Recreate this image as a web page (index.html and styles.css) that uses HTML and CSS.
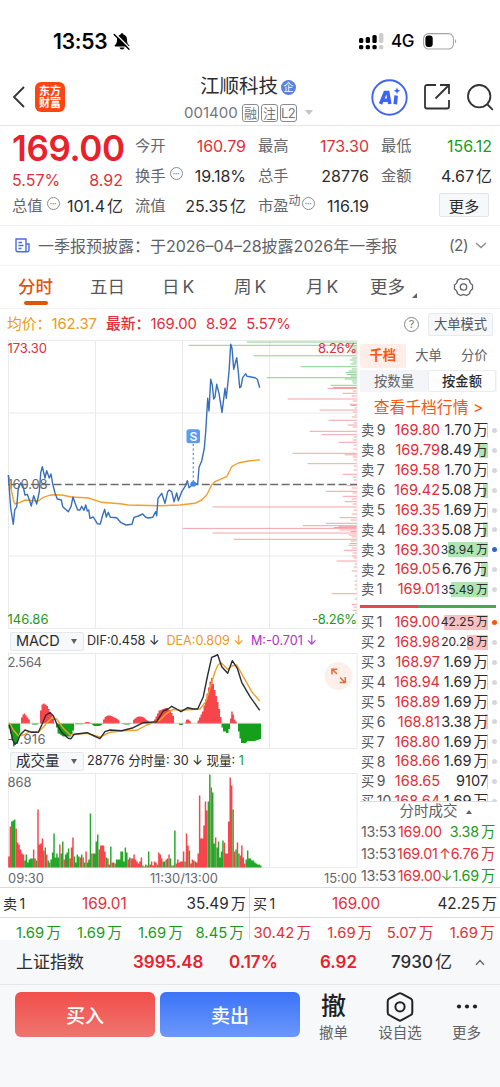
FILE: index.html
```html
<!DOCTYPE html>
<html lang="zh-CN">
<head>
    <meta charset="UTF-8">
    <meta name="viewport" content="width=device-width, initial-scale=1.0">
    <title>江顺科技 001400</title>
    <link rel="stylesheet" href="styles.css">
</head>
<body>

<div class="status">
    <span class="clock">13:53</span>
    <svg class="bell" width="18" height="19" viewBox="0 0 18 19">
        <path d="M9 1.2c.9 0 1.4.6 1.4 1.3 2.300.7 3.600 2.500 3.600 4.900 0 3.400.8 4.500 2 5.600.7.700.4 1.500-.5 1.500H2.500c-.9 0-1.200-.8-.5-1.500 1.200-1.100 2-2.200 2-5.600C4 5 5.300 3.200 7.600 2.500 7.600 1.800 8.100 1.200 9 1.200zM6.500 15.600h5c-.3 1.200-1.300 1.900-2.500 1.900s-2.200-.7-2.500-1.900z"/>
        <path d="M2.200 1.500L17 16.300" stroke="#fff" stroke-width="1.5"/>
        <path d="M1.200 2.400L16 17.200" stroke="#000" stroke-width="1.400" stroke-linecap="round"/>
    </svg>
    <svg class="signal" width="25" height="17" viewBox="0 0 25 17">
        <rect x="0" y="5" width="4.300" height="5" rx="1.500"/><rect x="6.700" y="4" width="4.300" height="6" rx="1.500"/><rect x="13.400" y="2" width="4.300" height="8" rx="1.500"/>
        <rect class="dim" x="20.100" y="0" width="4.300" height="10" rx="1.500"/>
        <rect x="0" y="12" width="4.300" height="4.300" rx="1.500"/><rect x="6.700" y="12" width="4.300" height="4.300" rx="1.500"/><rect x="13.400" y="12" width="4.300" height="4.300" rx="1.500"/>
        <rect class="dim" x="20.100" y="12" width="4.300" height="4.300" rx="1.500"/>
    </svg>
    <span class="net">4G</span>
    <svg class="battery" width="34" height="17" viewBox="0 0 34 17">
        <rect x=".6" y=".6" width="29.800" height="15.400" rx="5" fill="none" stroke="#a3a3a3" stroke-width="1.100"/>
        <rect x="2.400" y="2.500" width="7.300" height="11.600" rx="3"/>
        <path d="M32 6v4.500c1.600-.7 1.600-3.800 0-4.500z" fill="#a3a3a3"/>
    </svg>
</div>

<div class="header">
    <svg class="back" width="14" height="24" viewBox="0 0 14 24"><path d="M12 2L2 12l10 10"/></svg>
    <div class="logo"><span>东方</span><span>财富</span></div>
    <div class="title">
        <div class="name">江顺科技<span class="ent">企</span></div>
        <div class="code">001400<b>融</b><b>注</b><b>L2</b><i></i></div>
    </div>
    <svg class="ai" width="37" height="37" viewBox="0 0 37 37">
        <circle cx="18.500" cy="18.500" r="17.200" fill="none" stroke="#3f64f3" stroke-width="1.900"/>
        <path d="M9.500 25l4.700-11.500h2.600l2 11.500M11.800 21.300h6" fill="none" stroke="#3f64f3" stroke-width="3.600"/>
        <path d="M25.200 16.500l-1 8.700" stroke="#3f64f3" stroke-width="3.600"/>
        <path d="M26 8.500l1 2.300 2.300 1-2.300 1-1 2.300-1-2.300-2.300-1 2.300-1z" fill="#3f64f3"/>
    </svg>
    <svg class="share" width="26" height="26" viewBox="0 0 26 26"><path d="M12 1H3a2 2 0 0 0-2 2v19.500a2 2 0 0 0 2 2h20a2 2 0 0 0 2-2V16M16 1h9v9M25 1L11.500 14.500"/></svg>
    <svg class="search" width="27" height="27" viewBox="0 0 27 27"><circle cx="12.200" cy="12.200" r="11.200"/><path d="M20 20l5.800 5.800"/></svg>
</div>

<div class="quote">
    <div class="col first">
        <div class="price">169.00</div>
        <div class="chg"><span>5.57%</span><span>8.92</span></div>
        <div class="item"><label>总值<em>•••</em></label><span>101.4<u>亿</u></span></div>
    </div>
    <div class="col">
        <div class="item"><label>今开</label><span class="red">160.79</span></div>
        <div class="item"><label>换手<em>•••</em></label><span>19.18%</span></div>
        <div class="item"><label>流值</label><span>25.35<u>亿</u></span></div>
    </div>
    <div class="col">
        <div class="item"><label>最高</label><span class="red">173.30</span></div>
        <div class="item"><label>总手</label><span>28776</span></div>
        <div class="item"><label>市盈<sup>动</sup><em>•••</em></label><span>116.19</span></div>
    </div>
    <div class="col">
        <div class="item"><label>最低</label><span class="green">156.12</span></div>
        <div class="item"><label>金额</label><span>4.67<u>亿</u></span></div>
        <div class="item end"><button class="more">更多</button></div>
    </div>
</div>

<div class="notice">
    <svg width="15" height="15" viewBox="0 0 15 15"><path d="M11 13.800V1H1v10.800a2 2 0 0 0 2 2h9.500a1.500 1.500 0 0 0 1.500-1.500V6h-3M3.500 4.500H7M3.500 7.500h5M3.500 10.500h3"/></svg>
    <span class="text">一季报预披露：于2026–04–28披露2026年一季报</span>
    <span class="count">(2)</span>
    <svg class="arrow" width="12" height="7" viewBox="0 0 12 7"><path d="M1 1l5 4.500L11 1"/></svg>
</div>

<div class="tabs">
    <span class="on">分时</span>
    <span>五日</span>
    <span>日<s>K</s></span>
    <span>周<s>K</s></span>
    <span>月<s>K</s></span>
    <span>更多<i></i></span>
    <svg width="21" height="20" viewBox="0 0 21 20"><path d="M7.500 1.500q3 1.600 6 0l3 1.800q.2 3.200 3 4.700v4q-2.800 1.500-3 4.700l-3 1.800q-3-1.600-6 0l-3-1.800q-.2-3.200-3-4.700V8q2.800-1.500 3-4.700z"/><circle cx="10.500" cy="10" r="3.200"/></svg>
</div>

<div class="summary">
    <span class="orange">均价：162.37</span>
    <span class="red"><span class="latest">最新：</span>169.00</span>
    <span class="red">8.92</span>
    <span class="red">5.57%</span>
    <span class="help">?</span>
    <span class="mode">大单模式</span>
</div>

<div class="main">
    <div class="charts">
        <svg class="price-chart" width="358" height="289" viewBox="0 340 358 289">
            <path class="grid" d="M8.500 340V629M95.500 340V629M182.500 340V629M269.500 340V629M357 340V629M8 340.500H357M8 413H357M8 556H357M8 628.500H357"/>
            <path class="base" d="M8 484.500H357"/>
            <path class="depth-g" id="asks"/>
            <path class="depth-r" id="bids"/>
            <text class="t-gray" x="7.500" y="488.500" textLength="40">160.08</text>
            <polyline class="avg" points="8.500,475 11.700,491.700 13.300,500 15,504 20,502.300 25,500 38.300,501 43.300,497.300 50,495.200 55,494.700 62,495 71.700,497 88.300,498 101.700,502.300 120,503.700 128.300,505 160,505.700 180,505 195,503.300 201.700,500 206.700,495 211.700,485 215,481.700 226.700,476.700 231.700,466.700 238.300,463 248.300,461 259.700,459.700"/>
            <polyline class="line" points="8.300,475 10.700,508 13.300,524.300 14.700,510 16.700,506.700 18.300,488 20.700,483 23.300,487 25,495 27.300,494.300 30,501.700 31.300,506 33.700,495.700 36.700,504 39.300,491.700 40.700,473 42.300,466.700 45,478 46.700,470.700 49.300,478 51,474 52.700,484 55,493 57.300,499 61.300,500 62.700,506.700 68.300,511.700 71,506.700 73,497 75,503 77.700,510 80,510 81.700,506.300 84,510.300 85.700,505 87.300,511 88.700,510 90,518.300 93.300,517 97.300,523.700 100.300,524 102.700,515 104.700,509.300 106.300,517 108.300,512.300 110.300,517.300 116.700,517.700 121,522.700 126,525 132,524.300 134,517.300 138.300,516 142.700,514 145.700,517.300 148.300,518 152.700,517.300 155.700,511.700 156.700,515.700 158,498.300 161.700,493.300 165,503.300 167.700,491.700 169.300,490 171.700,491.700 174,501.700 176.700,493 178.300,500.700 181.700,491.700 185,486.700 187.300,480.700 189,487.700 193.300,484 197.700,484 199,467.300 201.700,461 204.300,448.300 205.700,431.700 207.700,398.300 209,411 210.700,379.300 212.300,385 213.700,399 215,397 216.700,384.300 219,393.300 222,412.300 225,388.300 226.300,398.300 229,371.700 230.700,344.300 232,348.300 233.700,369.300 236.700,357.700 238.300,371.700 239.700,387.700 241,386.700 242.700,377.700 245.700,373.700 247,376.300 255,377.700 257.300,379.300 259.700,387.700"/>
            <path class="s-line" d="M193.300 444V482"/>
            <circle cx="193.300" cy="484" r="2.800" fill="#3f86ee"/>
            <rect x="186.500" y="429.300" width="13.500" height="14" rx="2.500" fill="#5b9cf2"/>
            <text class="s-mark" x="193.300" y="440.500">S</text>
            <text class="t-red" x="7.500" y="352.500" textLength="39.500">173.30</text>
            <text class="t-red" x="318" y="352.500" textLength="39">8.26%</text>
            <text class="t-green" x="7.500" y="624" textLength="41">146.86</text>
            <text class="t-green" x="312" y="624" textLength="45">-8.26%</text>
        </svg>

        <div class="ind">
            <span class="pick">MACD<i></i></span>
            <span class="v dif">DIF:0.458 ↓</span>
            <span class="v dea">DEA:0.809 ↓</span>
            <span class="v m">M:-0.701 ↓</span>
        </div>
        <svg class="macd-chart" width="358" height="96" viewBox="0 653 358 96">
            <path class="grid" d="M8.500 653V749M95.500 653V749M182.500 653V749M269.500 653V749M357 653V749M8 653.500H357M8 748.500H357"/>
            <text class="t-gray" x="7.500" y="666.500" textLength="34.500">2.564</text>
            <text class="t-gray" x="7.500" y="744" textLength="38">-1.916</text>
            <path class="up" d="M21 723.500v-6h1.500v-3h1.300v-1h1.500v2h1.500v2h1.500v2h1.500v4zM40 723.500v-13h1.500v-6h1.500v-1h1.500v1h2v1.500h1.500v3h1.500v3h1.500v3h1.500v4h1.500v4.500zM83 723.500l3-1.500h3l2 1.500zM103 723.500v-4h1.500v-2l3-2h3l4 2 3 1.500 2 2v2.500zM133 723.500v-3l2-2 3-2h3l3 1 2 2 3 2v2zM154 723.500v-4h1.500v-3h1.500v-3h1.500v-3h1.500l3-1.500 3-1h2v2h3v3h1.500v3h1.500v7.500zM185 723.500l1.500-4h2l2 2 1 2zM197.500 723.500v-3h1.500v-3h1.500v-3h1.500v-3h1.500v-6h1.500v-6h1.500v-6h1.500v-6h1.500v-6h1.500v-3.500h1.500v6h1.500v6h1.500v6h1.500v6h1.500v7h1.500v8h1.500v6.500zM230 723.500v-5h1.200v-7h1.500v3h1.200v5h1.500v2h1.300v2z"/>
            <path class="down" d="M8.500 723.500v5h1.500v5h1.500v7h1.500v6h1.500v-2h1.500v-2h1.500v-5h1.500v-4h1.200v-10zM32 723.500v1h6v-1zM56 723.500v4h1.500v6h1.500l4 3h8v-2h1.500v-4h1.500v-7zM75 723.500v.8h8v-.8zM91 723.500l3 2.500h5l2-.5 2-2zM121 723.500l4 1h4l3-1zM178.500 723.500l1 1.500h3l1-1.500zM221.500 723.500v4h1.500v4h3v1.500h2.500v-4h1.500v-5.500zM238 723.500v8h1.500v7h1.500v4.500h5l1.500-2h7l3-1 3.500-1v-15.500z"/>
            <path class="zero" d="M8.500 723.300H261"/>
            <polyline class="avg" points="9.300,722.700 13.300,730 18.300,736 23.300,735 30,731.500 38.300,732.300 45,725 51.700,717.700 56.700,719 63.300,728.300 70,735 86.700,733.300 100,737 110,732.300 123.300,730.700 136.700,730.300 146.700,725 160,720 166.700,713.300 173.300,709.300 180,710.300 188.300,709.700 200,709 205.700,701.700 210,688.300 215,671.700 218,665 221,662.700 227.700,669.300 232,666 236.700,665 243.300,676.700 251.700,691.700 259.700,701"/>
            <polyline class="dif-line" points="9.300,725 12.700,740 15,744.300 17.300,742.300 20,735 25,730 31.700,732.300 38.300,732.300 41.700,725 46,715 50,712.700 53.300,715.700 57.300,725 61.700,732.300 68.300,738.300 71,738.700 74,734.300 87.300,732.700 94.300,736 100,738.700 105,731.700 110,730 121.700,730.700 133.300,727.700 143.300,722.700 156.700,721.700 163.300,711 168.300,709 171.700,706.300 176.700,709 181,711.700 187.700,707.700 193.300,709 197.700,709 203.300,696.700 207.700,675 211.700,657.300 215,656 217.700,654.700 221.700,666.700 227.700,673.300 232.300,660.700 237.300,668.300 241.700,682.300 250,696.700 259.700,710.300"/>
            <circle cx="338.500" cy="676" r="14" fill="#fdf0ea"/>
            <path class="expand" d="M337 674l-4.500-4.500M332 674.500v-5.300h5.300M340 677.500l5 5M345.300 677v5.600h-5.600"/>
        </svg>

        <div class="ind">
            <span class="pick">成交量<i></i></span>
            <span class="v vol">28776 分时量: 30 ↓ 现量: <span class="green">1</span></span>
        </div>
        <svg class="vol-chart" width="358" height="95" viewBox="0 773 358 95">
            <path class="grid" d="M8.500 773V868M95.500 773V868M182.500 773V868M269.500 773V868M357 773V868M8 773.500H357M8 867.500H357"/>
            <path class="vol-r" id="vol-up"/>
            <path class="vol-g" id="vol-down"/>
            <text class="t-gray" x="7.500" y="786.500" textLength="24">868</text>
        </svg>
        <div class="times"><span>09:30</span><span>11:30/13:00</span><span>15:00</span></div>
    </div>

    <div class="book">
        <div class="book-tabs"><span class="on">千档</span><span>大单</span><span>分价</span></div>
        <div class="switch"><span>按数量</span><span class="on">按金额</span></div>
        <div class="link">查看千档行情 &gt;</div>
        <div class="rows sell">
            <div class="row"><label>卖<s>9</s></label><b>169.80</b><span>1.70<u>万</u><i style="width:1px"></i></span></div>
            <div class="row"><label>卖<s>8</s></label><b>169.79</b><span>8.49<u>万</u><i style="width:9px"></i></span></div>
            <div class="row"><label>卖<s>7</s></label><b>169.58</b><span>1.70<u>万</u><i style="width:1px"></i></span></div>
            <div class="row"><label>卖<s>6</s></label><b>169.42</b><span>5.08<u>万</u><i style="width:5px"></i></span></div>
            <div class="row"><label>卖<s>5</s></label><b>169.35</b><span>1.69<u>万</u><i style="width:1px"></i></span></div>
            <div class="row"><label>卖<s>4</s></label><b>169.33</b><span>5.08<u>万</u><i style="width:5px"></i></span></div>
            <div class="row long blue"><label>卖<s>3</s></label><b>169.30</b><span>38.94<u>万</u><i style="width:40px"></i></span></div>
            <div class="row"><label>卖<s>2</s></label><b>169.05</b><span>6.76<u>万</u><i style="width:7px"></i></span></div>
            <div class="row long"><label>卖<s>1</s></label><b>169.01</b><span>35.49<u>万</u><i style="width:37px"></i></span></div>
        </div>
        <div class="ratio"><i></i></div>
        <div class="rows buy">
            <div class="row long hot"><label>买<s>1</s></label><b>169.00</b><span>42.25<u>万</u><i style="width:44px"></i></span></div>
            <div class="row long"><label>买<s>2</s></label><b>168.98</b><span>20.28<u>万</u><i style="width:21px"></i></span></div>
            <div class="row"><label>买<s>3</s></label><b>168.97</b><span>1.69<u>万</u><i style="width:1px"></i></span></div>
            <div class="row"><label>买<s>4</s></label><b>168.94</b><span>1.69<u>万</u><i style="width:1px"></i></span></div>
            <div class="row"><label>买<s>5</s></label><b>168.89</b><span>1.69<u>万</u><i style="width:1px"></i></span></div>
            <div class="row"><label>买<s>6</s></label><b>168.81</b><span>3.38<u>万</u><i style="width:3px"></i></span></div>
            <div class="row"><label>买<s>7</s></label><b>168.80</b><span>1.69<u>万</u><i style="width:1px"></i></span></div>
            <div class="row"><label>买<s>8</s></label><b>168.66</b><span>1.69<u>万</u><i style="width:1px"></i></span></div>
            <div class="row"><label>买<s>9</s></label><b>168.65</b><span>9107<i style="width:1px"></i></span></div>
            <div class="row"><label>买<s>10</s></label><b>168.64</b><span>1.69<u>万</u><i style="width:1px"></i></span></div>
        </div>
        <div class="deals-title">分时成交<i></i></div>
        <div class="deals">
            <div class="deal"><span>13:53</span><b>169.00</b><em class="green">3.38<u>万</u></em></div>
            <div class="deal"><span>13:53</span><b>169.01</b><em class="red">↑6.76<u>万</u></em></div>
            <div class="deal"><span>13:53</span><b>169.00</b><em class="green">↓1.69<u>万</u></em></div>
        </div>
    </div>
</div>

<div class="level">
    <div class="side"><label>卖<s>1</s></label><b>169.01</b><span>35.49<u>万</u></span></div>
    <div class="side"><label>买<s>1</s></label><b>169.00</b><span>42.25<u>万</u></span></div>
</div>
<div class="queue">
    <div class="half green"><span>1.69<u>万</u></span><span>1.69<u>万</u></span><span>1.69<u>万</u></span><span>8.45<u>万</u></span></div>
    <div class="half red"><span>30.42<u>万</u></span><span>1.69<u>万</u></span><span>5.07<u>万</u></span><span>1.69<u>万</u></span></div>
</div>

<div class="index">
    <span class="idx-name">上证指数</span>
    <b class="idx-val">3995.48</b>
    <b class="idx-pct">0.17%</b>
    <b class="idx-chg">6.92</b>
    <span class="idx-amt">7930<u>亿</u></span>
    <svg width="10" height="7" viewBox="0 0 10 7"><path d="M1 5.800L5 1.500l4 4.300"/></svg>
</div>

<div class="actions">
    <button class="btn buy-btn">买入</button>
    <button class="btn sell-btn">卖出</button>
    <div class="act"><span class="glyph">撤</span><span>撤单</span></div>
    <div class="act wide">
        <svg width="28" height="30" viewBox="0 0 28 30"><path d="M12.500 1.600a3 3 0 0 1 3 0l9.300 5a3 3 0 0 1 1.500 2.600v11.200a3 3 0 0 1-1.500 2.600l-9.300 5.200a3 3 0 0 1-3 0L3.200 23a3 3 0 0 1-1.500-2.600V9.200a3 3 0 0 1 1.500-2.600z"/><circle cx="14" cy="14.800" r="4.600"/></svg>
        <span>设自选</span>
    </div>
    <div class="act">
        <svg width="28" height="30" viewBox="0 0 28 30"><g class="dots"><circle cx="6" cy="14.500" r="2.100"/><circle cx="14" cy="14.500" r="2.100"/><circle cx="22" cy="14.500" r="2.100"/></g></svg>
        <span>更多</span>
    </div>
</div>

<script src="chart.js"></script>
</body>
</html>
```
FILE: styles.css
```css
* {
    box-sizing: border-box;
}
body {
    margin: 0;
    width: 500px;
    height: 1087px;
    overflow: hidden;
    background: #f7f8fa;
    color: #2b2c30;
    font-family: Inter, "Noto Sans CJK SC", sans-serif;
    font-size: 16px;
    line-height: 1;
}
button {
    font-family: inherit;
    padding: 0;
    border: 0;
}
b, em, i, s, u {
    font-weight: normal;
    font-style: normal;
    text-decoration: none;
}
u {
    margin-left: 2px;
}
svg {
    display: block;
    flex: none;
}
.red {
    color: #e0303a;
}
.green {
    color: #1c9a1c;
}
.orange {
    color: #ec9a25;
}

/* status bar */
.status {
    display: flex;
    align-items: center;
    height: 66px;
    padding: 16px 43px 0 53px;
    background: #fff;
    color: #000;
}
.clock {
    width: 60px;
    font-size: 21px;
    font-weight: 600;
    letter-spacing: -.2px;
}
.signal {
    margin-left: auto;
}
.signal .dim {
    fill: #ccc;
}
.net {
    width: 24px;
    margin: 0 8px 0 7px;
    font-size: 17px;
    font-weight: 500;
    letter-spacing: -.5px;
}

/* header */
.header {
    display: flex;
    align-items: center;
    height: 60px;
    padding: 3px 6px 0 12px;
    border-bottom: 1px solid #e4e4e6;
    background: #fff;
}
.header svg {
    fill: none;
    stroke: #333;
    stroke-width: 1.8;
}
.back {
    margin-right: 9px;
}
.logo {
    display: flex;
    flex: none;
    flex-direction: column;
    align-items: center;
    justify-content: center;
    width: 30px;
    height: 30px;
    border-radius: 6px;
    background: #fb4613;
    color: #fff;
    font-size: 11px;
    font-weight: 700;
    line-height: 12px;
}
.title {
    flex: none;
    width: 142px;
    margin-left: 116px;
    padding-top: 6px;
}
.name {
    display: flex;
    align-items: center;
    height: 25px;
    padding-left: 19px;
    font-size: 19.500px;
    white-space: nowrap;
}
.ent {
    width: 15px;
    height: 15px;
    margin-left: 3px;
    border-radius: 50%;
    background: #5a82de;
    color: #fff;
    font-size: 10px;
    line-height: 15px;
    text-align: center;
}
.code {
    display: flex;
    align-items: center;
    gap: 2px;
    height: 26px;
    padding-left: 3px;
    color: #74757a;
    font-size: 15px;
}
.code b {
    width: 17px;
    height: 18px;
    border: 1px solid #8b8c90;
    border-radius: 3px;
    font-size: 13px;
    line-height: 16px;
    text-align: center;
    letter-spacing: -.5px;
}
.code b:first-of-type {
    margin-left: 2px;
}
.code i {
    margin-left: 6px;
    border: 4px solid transparent;
    border-top: 5px solid #c3c4c7;
    border-bottom: 0;
}
.header .ai {
    margin-left: 48px;
    stroke: none;
}
.share {
    margin-left: 16px;
}
.search {
    margin-left: 17px;
}

/* quote */
.quote {
    display: flex;
    gap: 12px;
    height: 100px;
    padding: 5px 8px 0 12px;
    border-bottom: 1px solid #f0f0f2;
    background: #fff;
}
.col {
    width: 111px;
}
.item {
    display: flex;
    align-items: center;
    justify-content: space-between;
    height: 30px;
    white-space: nowrap;
}
.item label {
    display: flex;
    align-items: center;
    color: #65666b;
    font-size: 15.300px;
}
.item em {
    width: 13px;
    height: 13px;
    margin: -5px 0 0 4px;
    border: 1px solid #8a8b90;
    border-radius: 50%;
    color: #77787c;
    font-size: 4px;
    line-height: 11px;
    text-align: center;
}
.item sup {
    margin-top: -9px;
    font-size: 12px;
}
.item sup + em {
    margin-left: 1px;
}
.price {
    height: 35px;
    color: #e8212b;
    font-size: 35px;
    font-weight: 600;
    line-height: 34px;
    letter-spacing: -.4px;
}
.chg {
    display: flex;
    justify-content: space-between;
    height: 25px;
    color: #e0303a;
    line-height: 29px;
}
.end {
    justify-content: flex-end;
}
.more {
    width: 50px;
    height: 24px;
    margin: -3px 3px 0 0;
    border: 1px solid #e3e4e8;
    border-radius: 2px;
    background: #f7f8fa;
    color: #2b2c30;
    font-size: 15.300px;
}

/* notice */
.notice {
    display: flex;
    align-items: center;
    height: 40px;
    padding: 0 13px 0 15px;
    border-bottom: 1px solid #f3f3f4;
    background: #fff;
    color: #606166;
    font-size: 15.300px;
}
.notice svg {
    fill: none;
    stroke: #4c6cdc;
    stroke-width: 1.4;
}
.notice .arrow {
    stroke: #8a8b90;
}
.notice .text {
    margin-left: 8px;
    font-size: 16px;
    white-space: nowrap;
}
.notice .count {
    margin: 0 7px 0 auto;
    letter-spacing: -.5px;
}

/* period tabs */
.tabs {
    display: flex;
    align-items: center;
    height: 43px;
    padding: 0 26px 0 18px;
    border-bottom: 1px solid #f6f2ef;
    background: #fff;
    color: #55565b;
    font-size: 17.500px;
}
.tabs span {
    display: flex;
    position: relative;
    width: 72px;
}
.tabs span:nth-child(5) {
    width: 64px;
}
.tabs s {
    margin-left: 3px;
}
.tabs .on {
    color: #e2540b;
    font-weight: 500;
}
.tabs .on::after {
    content: "";
    position: absolute;
    left: 6px;
    bottom: -9px;
    width: 24px;
    height: 4px;
    border-radius: 2px;
    background: #e2540b;
}
.tabs i {
    align-self: flex-end;
    margin: 0 0 -2px 7px;
    border-left: 5px solid transparent;
    border-bottom: 5px solid #606166;
}
.tabs svg {
    margin-left: auto;
    fill: none;
    stroke: #606166;
    stroke-width: 1.3;
}

.summary {
    display: flex;
    align-items: center;
    gap: 9px;
    height: 31px;
    padding: 0 7px 0 7px;
    background: #fff;
    font-size: 14.800px;
    white-space: nowrap;
}
.summary .latest {
    font-weight: 500;
}
.help {
    width: 15px;
    height: 15px;
    margin-left: auto;
    border: 1px solid #85868b;
    border-radius: 50%;
    color: #77787c;
    font-size: 11px;
    line-height: 13px;
    text-align: center;
}
.mode {
    width: 65px;
    height: 23px;
    border: 1px solid #e9eaee;
    border-radius: 2px;
    background: #f7f8fa;
    color: #55565b;
    font-size: 13.300px;
    line-height: 21px;
    text-align: center;
}

/* charts */
.main {
    display: flex;
    height: 548px;
    border-bottom: 1px solid #d9dade;
    background: #fff;
}
.charts {
    width: 358px;
}
.charts text {
    font-size: 13px;
}
.grid {
    stroke: #e9eaec;
    fill: none;
}
.base {
    stroke: #6b6b6f;
    stroke-width: 1.4;
    stroke-dasharray: 8 3.4;
}
.depth-g, .depth-r {
    stroke-width: .9;
    stroke: #7dcc82;
}
.depth-r {
    stroke: #f5989b;
}
.line, .avg, .dif-line {
    fill: none;
    stroke: #376fba;
    stroke-width: 1.4;
    stroke-linejoin: round;
}
.avg {
    stroke: #f0a02c;
}
.dif-line {
    stroke: #2b2d33;
}
.s-line {
    stroke: #5b9cf2;
    stroke-width: 1.4;
    stroke-dasharray: 2 2.5;
}
.charts .s-mark {
    fill: #fff;
    font-size: 12px;
    font-weight: 600;
    text-anchor: middle;
}
.t-red {
    fill: #e0303a;
}
.t-green {
    fill: #1c9a1c;
}
.t-gray {
    fill: #66676b;
}
.up {
    fill: #f6454b;
}
.down {
    fill: #14a01b;
}
.zero {
    stroke: #f29a9a;
    stroke-width: .6;
}
.expand {
    fill: none;
    stroke: #dd6c3c;
    stroke-width: 1.5;
}
.vol-r, .vol-g {
    stroke: #f6454b;
    stroke-width: 1.46;
}
.vol-g {
    stroke: #25a829;
}
.ind {
    display: flex;
    align-items: center;
    height: 24px;
    padding-left: 10px;
    font-size: 12.600px;
    white-space: nowrap;
}
.pick {
    display: flex;
    align-items: center;
    justify-content: space-between;
    width: 74px;
    height: 19px;
    padding: 0 6px 0 5px;
    border: 1px solid #e6e7eb;
    border-radius: 2px;
    background: #f7f8fa;
    font-size: 14.500px;
}
.pick i {
    border: 3px solid transparent;
    border-top: 5px solid #606166;
    border-bottom: 0;
}
.v {
    margin-left: 7px;
}
.dif, .vol {
    margin-left: 3px;
}
.dea {
    color: #ec9a25;
}
.m {
    color: #b32cc8;
}
.times {
    display: flex;
    justify-content: space-between;
    height: 19px;
    padding: 0 1px 0 8px;
    color: #66676b;
    font-size: 12.900px;
    line-height: 21px;
}

/* order book */
.book {
    width: 142px;
    padding: 4px 3px 0 2px;
}
.book-tabs {
    display: flex;
    height: 24px;
    color: #606166;
    font-size: 13.300px;
    line-height: 23px;
    text-align: center;
}
.book-tabs span {
    width: 46px;
}
.book-tabs .on {
    border-radius: 2px;
    background: #feeee7;
    color: #f15a14;
    font-weight: 600;
}
.switch {
    display: flex;
    height: 22px;
    margin: 2px 0 0;
    background: #f4f5f8;
    color: #606166;
    font-size: 13.300px;
    line-height: 22px;
    text-align: center;
}
.switch span {
    width: 68px;
}
.switch .on {
    border: 1px solid #ebecf0;
    border-radius: 3px;
    background: #fff;
    color: #2b2c30;
    font-weight: 500;
    line-height: 20px;
}
.link {
    height: 28px;
    color: #f15a14;
    font-size: 15.800px;
    line-height: 31px;
    text-align: center;
    white-space: nowrap;
}
.row {
    display: flex;
    position: relative;
    align-items: center;
    height: 19.900px;
    padding: 1px 5px 0 1px;
    font-size: 14.500px;
    white-space: nowrap;
}
.row label {
    width: 32px;
    color: #55565b;
    font-size: 13.300px;
}
.row s, .side s {
    margin-left: 2.500px;
    font-size: 14px;
}
.row b {
    width: 47px;
    margin-right: auto;
    color: #e0303a;
    text-align: right;
}
.row span {
    display: flex;
    position: relative;
    z-index: 0;
    align-items: center;
    justify-content: flex-end;
    height: 15px;
    margin-right: 4px;
}
.row span i {
    position: absolute;
    z-index: -1;
    top: 0;
    right: 0;
    height: 15px;
    background: #b0e5b2;
}
.buy .row span i {
    background: #f9c0c2;
}
.row::after {
    content: "";
    flex: none;
    width: 5px;
    height: 5px;
    margin-right: -5px;
    border-radius: 50%;
    background: #d6d7e0;
}
.long span {
    font-size: 12px;
}
.blue::after {
    background: #2a68c8;
}
.hot::after {
    background: #ee5a10;
}
.ratio {
    height: 3px;
    margin: 6px 1px 4px 0;
    background: #3fae45;
}
.ratio i {
    display: block;
    width: 58px;
    height: 3px;
    background: #e2484c;
}
.buy {
    height: 189px;
    overflow: hidden;
}
.deals-title {
    display: flex;
    align-items: center;
    justify-content: center;
    gap: 8px;
    height: 20px;
    padding-left: 14px;
    border-top: 1px solid #dcdde1;
    color: #606166;
    font-size: 14.500px;
}
.deals-title i {
    border: 3px solid transparent;
    border-bottom: 4px solid #606166;
    border-top: 0;
}
.deal {
    display: flex;
    align-items: center;
    height: 22px;
    padding: 0 2px 0 1px;
    font-size: 14.300px;
    letter-spacing: -.2px;
    white-space: nowrap;
}
.deal span {
    width: 37px;
    color: #606166;
    letter-spacing: -.3px;
}
.deal b {
    width: 43px;
    color: #e0303a;
}
.deal em {
    margin-left: auto;
}

/* best bid and ask */
.level, .queue {
    display: flex;
    height: 30px;
    border-bottom: 1px solid #dcdde1;
    background: #fff;
}
.side {
    display: flex;
    align-items: center;
    width: 250px;
    padding: 2px 3px 0;
    border-right: 1px solid #dcdde1;
    font-size: 15.300px;
}
.side + .side {
    border: 0;
}
.side label {
    width: 79px;
    font-size: 14px;
}
.side b {
    margin-right: auto;
    color: #e0303a;
}
.queue {
    height: 22px;
    overflow: hidden;
    border: 0;
}
.half {
    display: flex;
    width: 250px;
    padding-right: 5px;
    border-right: 1px solid #dcdde1;
    font-size: 14.800px;
    line-height: 31px;
}
.half + .half {
    border: 0;
}
.half span {
    width: 61.200px;
    text-align: right;
    white-space: nowrap;
}

/* index bar */
.index {
    display: flex;
    align-items: center;
    height: 45px;
    padding: 0 15px 0 16px;
    border-bottom: 1px solid #e6e7ea;
    font-size: 17px;
    white-space: nowrap;
}
.index b {
    color: #e8212b;
    font-weight: 600;
}
.idx-name {
    width: 117px;
}
.idx-val {
    width: 96px;
}
.idx-pct {
    width: 91px;
}
.idx-chg {
    width: 71px;
}
.idx-amt {
    font-weight: 500;
}
.index svg {
    margin-left: auto;
    fill: none;
    stroke: #606166;
    stroke-width: 1.3;
}

/* bottom actions */
.actions {
    display: flex;
    padding: 7px 0 0 15px;
}
.btn {
    flex: none;
    width: 140px;
    height: 45px;
    margin-right: 5px;
    border-radius: 6px;
    color: #fff;
    font-size: 19px;
    font-weight: 500;
}
.buy-btn {
    background: linear-gradient(#f24f4b, #ed746f);
}
.sell-btn {
    background: linear-gradient(#3b74f8, #6c97fb);
}
.act {
    display: flex;
    flex: none;
    flex-direction: column;
    align-items: center;
    width: 57px;
    color: #606166;
    font-size: 14.500px;
}
.act.wide {
    width: 76px;
}
.act svg, .glyph {
    height: 30px;
    margin-bottom: 4px;
    fill: none;
    stroke: #222;
    stroke-width: 2;
}
.act .glyph {
    color: #222;
    font-size: 25px;
    font-weight: 500;
    line-height: 28px;
    stroke: none;
}
.act .dots {
    fill: #222;
    stroke: none;
}
```
FILE: chart.js
```js
// minute volume, positive = up bar, negative = down bar
var volume = [
    11, 41, -46, -47, -48, 39, 25, 23, 18, 14, 13, -7, -13, -5, -8, -9, -9, 18, 9, -7,
    58, 23, 24, 29, 17, -20, 13, -7, 5, -8, -15, -34, -10, -14, -10, 23, -14, -26, 8, -13,
    -15, -19, 9, 20, 30, -11, -5, -13, -11, 10, -13, 10, -5, 16, -5, -8, -54, 14, -14, -14,
    -26, -33, 18, 22, 22, 22, 16, -10, 9, 3, -21, 5, -5, 4, -8, -8, -8, -16, -16, -6,
    -20, -15, 8, -10, 9, 9, 13, 8, 6, 4, 6, 10, -2, 1, -3, 2, -16, 3, 6, 2,
    6, 5, -3, 15, 13, 9, -6, -6, 8, -9, 13, -9, 2, -2, -37, 4, 8, 5, 6, 6,
    16, -6, 34, 22, -17, 4, 8, 7, -6, 5, 14, 72, 29, 29, 42, 66, 57, -66, -93, 80,
    -75, -24, 30, -20, -26, -10, -16, -27, 25, 14, 14, 46, 90, 82, -58, 16, -18, 25, -14, 12,
    22, 10, 4, -8, -17, -9, -9, -7, -7, -5, -4, -3, -3, -2
];
var up = '';
var down = '';
volume.forEach(function (v, i) {
    var bar = 'M' + (8.9 + i * 1.456).toFixed(2) + ' 867.6v' + -Math.abs(v);
    if (v > 0) up += bar;
    else down += bar;
});
document.getElementById('vol-up').setAttribute('d', up);
document.getElementById('vol-down').setAttribute('d', down);

// resting orders by price: [y, length]
var asks = [
    [342, 110], [343.5, 8], [345.3, 168], [347, 6], [349, 4], [351, 9], [353, 5], [355.8, 103], [358, 5], [360, 7],
    [362, 4], [364, 6], [366.7, 56], [369, 5], [371, 8], [372.7, 11], [374.5, 10], [376, 6], [377.7, 90], [379, 12],
    [381, 5], [383, 4], [385.3, 26], [387.5, 24]
];
var bids = [
    [388.5, 29], [391, 4], [393.3, 14], [396, 5], [399, 69], [401, 4], [404.3, 7], [405.5, 6], [408, 2], [410, 37],
    [412, 4], [415, 2], [417, 5], [420.3, 28], [423, 3], [425, 9], [427, 4], [431.3, 47], [434.7, 35], [437, 3],
    [440, 4], [442.3, 18], [445, 3], [449, 3], [453.3, 64], [454.8, 12], [457, 4], [460, 3], [463.7, 49], [466, 3],
    [470, 3], [474.3, 14], [477, 4], [480, 3], [485.7, 10], [488, 5], [491.3, 31], [493, 4], [496.3, 14], [499, 5],
    [501.7, 12], [504, 4], [507, 144], [510, 3], [514, 5], [517.7, 17], [520, 6], [523.3, 31], [525.7, 54], [526.7, 18],
    [527.5, 23], [528.4, 174], [530, 17], [531.5, 6], [533, 144], [535, 8], [537, 5], [539.3, 123], [541, 6], [543.5, 7],
    [545.3, 8], [548, 5], [550.3, 13], [553, 4], [556, 5], [558, 3], [561, 20], [564, 2], [567, 3], [571, 5],
    [576, 2], [581, 2], [585, 2], [589, 2], [593.7, 25], [599, 2], [604.3, 5], [607, 3], [610.3, 4], [613, 2]
];
function depth(list) {
    return list.map(function (p) {
        return 'M356.7 ' + p[0] + 'h' + -p[1];
    }).join('');
}
document.getElementById('asks').setAttribute('d', depth(asks));
document.getElementById('bids').setAttribute('d', depth(bids));
```
